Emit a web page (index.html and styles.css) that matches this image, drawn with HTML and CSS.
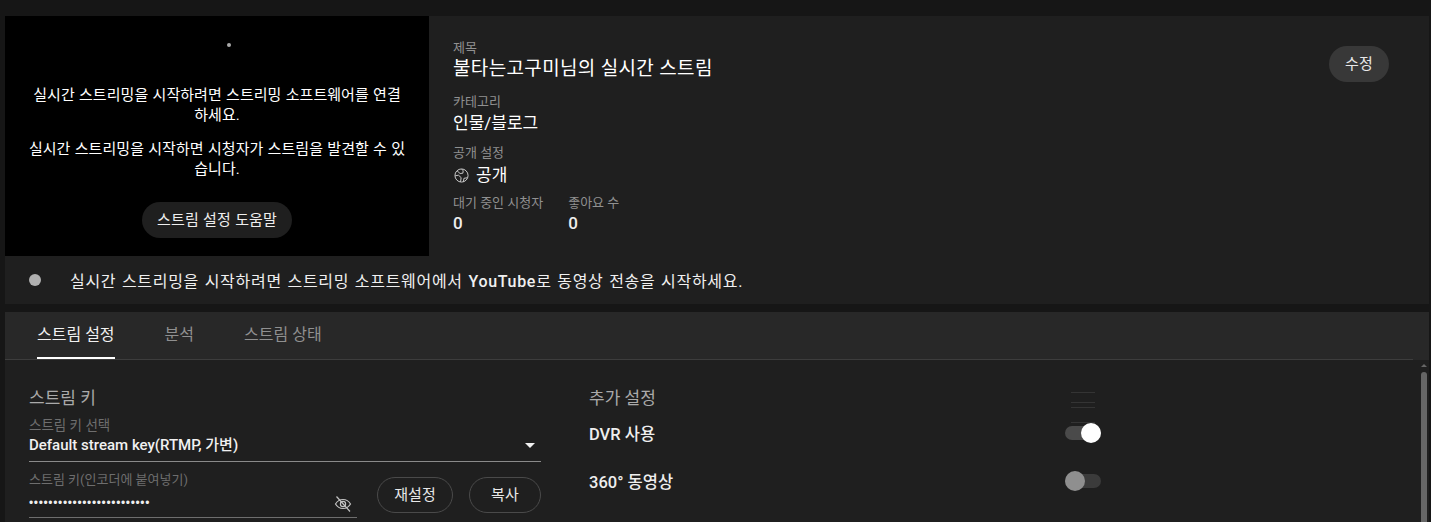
FILE: index.html
```html
<!DOCTYPE html>
<html lang="ko">
<head>
<meta charset="utf-8">
<title>스트림 설정</title>
<link rel="stylesheet" href="styles.css">
</head>
<body>
<div class="page">
  <section class="top">
    <div class="video">
      <span class="dot"></span>
      <p class="msg first">실시간 스트리밍을 시작하려면 스트리밍 소프트웨어를 연결하세요.</p>
      <p class="msg second">실시간 스트리밍을 시작하면 시청자가 스트림을 발견할 수 있습니다.</p>
      <button class="help">스트림 설정 도움말</button>
    </div>
    <div class="info">
      <div class="fields">
        <div class="label">제목</div>
        <div class="title">불타는고구미님의 실시간 스트림</div>
        <div class="label cat">카테고리</div>
        <div class="value">인물/블로그</div>
        <div class="label vis">공개 설정</div>
        <div class="value public">
          <svg class="globe" viewBox="0 0 16 16" width="15" height="15" fill="none" stroke="#cfcfcf" stroke-width="1"><circle cx="8" cy="8" r="7"/><path d="M3.200 2.900l3.300 3 3-.4.3-2.500-1.800-2M1.200 8.300l3.600-.6 2.800 2.500-.6 4.600M10 14.600l.6-3.600 3.400-.6"/></svg>
          <span>공개</span>
        </div>
        <div class="stats">
          <div class="stat"><div class="label">대기 중인 시청자</div><div class="num">0</div></div>
          <div class="stat"><div class="label">좋아요 수</div><div class="num">0</div></div>
        </div>
      </div>
      <button class="edit">수정</button>
    </div>
  </section>
  <section class="status">
    <span class="led"></span>
    <span class="status-text">실시간 스트리밍을 시작하려면 스트리밍 소프트웨어에서 <b class="latin">YouTube</b>로 동영상 전송을 시작하세요.</span>
  </section>
  <nav class="tabs">
    <a class="tab active">스트림 설정</a>
    <a class="tab">분석</a>
    <a class="tab">스트림 상태</a>
  </nav>
  <section class="panel">
    <div class="left">
      <h2 class="head">스트림 키</h2>
      <div class="small pick">스트림 키 선택</div>
      <div class="select"><span>Default stream key(RTMP, 가변)</span><i class="caret"></i></div>
      <div class="keyrow">
        <div class="keyfield">
          <div class="small keylabel">스트림 키(인코더에 붙여넣기)</div>
          <div class="keyinput">
            <span class="dots">•••••••••••••••••••••••••</span>
            <svg class="eye" viewBox="0 0 20 20" width="20" height="20" fill="none" stroke="#c4c4c4" stroke-width="1.200"><path d="M2.500 10c1.800-3 4.400-4.500 7.500-4.500s5.700 1.500 7.500 4.500c-1.800 3-4.400 4.500-7.500 4.500S4.300 13 2.500 10z"/><circle cx="10" cy="10" r="2.600"/><path d="M3.500 2.500l13.500 15"/></svg>
          </div>
        </div>
        <button class="outline reset">재설정</button>
        <button class="outline copy">복사</button>
      </div>
    </div>
    <div class="right">
      <h2 class="head">추가 설정</h2>
      <div class="row dvr"><span>DVR 사용</span><span class="switch on"><i></i></span></div>
      <div class="row vr"><span>360° 동영상</span><span class="switch"><i></i></span></div>
      <div class="ghost"><i></i><i></i><i></i><i></i></div>
    </div>
    <div class="scroll"><i class="arrow"></i><i class="thumb"></i></div>
  </section>
</div>
</body>
</html>
```
FILE: styles.css
```css
* { box-sizing: border-box; }
html, body { margin: 0; height: 522px; overflow: hidden; background: #161616; }
body, button { font-family: Roboto, "Noto Sans CJK KR", sans-serif; color: #fff; }
.page { padding: 16px 2px 0 5px; width: 1431px; }
p, h2 { margin: 0; font-weight: 400; }
button { border: 0; cursor: pointer; font-weight: 400; font-size: 15px; letter-spacing: .1px; word-spacing: .5px; line-height: 20px; padding: 0; }

.top { display: flex; height: 240px; background: #1f1f1f; }
.video { width: 424px; background: #000; display: flex; flex-direction: column; align-items: center; padding-top: 27px; }
.dot { width: 4px; height: 4px; border-radius: 50%; background: #aaa; margin: 0 0 38px 24px; }
.msg { width: 378px; font-size: 15px; letter-spacing: .05px; word-spacing: .5px; line-height: 20px; text-align: center; color: #fff; word-break: break-all; }
.msg.first { margin-bottom: 14px; }
.msg.second { margin-bottom: 23px; }
.help { width: 150px; height: 36px; border-radius: 18px; background: #1f1f1f; color: #eee; }

.info { flex: 1; display: flex; justify-content: space-between; padding: 24px 40px 0 24px; }
.label { font-size: 13px; line-height: 16px; color: #909090; }
.title { font-size: 19px; letter-spacing: .35px; line-height: 26px; }
.label.cat { margin-top: 12px; }
.value { font-size: 17px; line-height: 24px; margin-top: 1px; }
.label.vis { margin-top: 10px; }
.public { display: flex; align-items: center; gap: 7px; margin-top: 2px; }
.globe { flex: none; margin-left: 1px; }
.stats { display: flex; gap: 25px; margin-top: 8px; }
.num { font-size: 17px; line-height: 24px; font-weight: 500; color: #eee; }
.edit { width: 60px; height: 36px; border-radius: 18px; background: #383838; color: #e8e8e8; margin-top: 6px; }

.status { height: 48px; background: #1f1f1f; display: flex; align-items: center; padding-left: 24px; margin-bottom: 8px; }
.led { width: 12px; height: 12px; border-radius: 50%; background: #b0b0b0; margin-right: 29px; }
.status-text { font-size: 16px; letter-spacing: .7px; word-spacing: 1px; color: #f0f0f0; }
.latin { font-weight: 500; }

.tabs { position: relative; height: 48px; background: #282828; display: flex; padding-left: 32px; gap: 50px; }
.tabs::after { content: ""; position: absolute; left: 0; bottom: 0; width: 1408px; height: 1px; background: #3d3d3d; }
.tab { position: relative; z-index: 1; font-size: 16px; line-height: 46px; height: 47px; color: #909090; }
.tab.active { color: #f1f1f1; border-bottom: 2px solid #fff; }

.panel { position: relative; height: 162px; background: #1f1f1f; display: flex; padding: 27px 0 0 24px; }
.left { width: 512px; margin-right: 48px; }
.right { position: relative; width: 512px; }
.head { font-size: 17px; line-height: 22px; color: #aaa; }
.small { font-size: 13.500px; line-height: 16px; color: #6e6e6e; }
.pick { margin-top: 8px; }
.keylabel { font-size: 13px; }
.select { display: flex; justify-content: space-between; align-items: center; height: 29px; border-bottom: 1px solid #8a8a8a; font-size: 15px; font-weight: 500; color: #f1f1f1; padding: 0 6px 8px 0; }
.caret { width: 0; height: 0; border: 5px solid transparent; border-top: 5px solid #f1f1f1; border-bottom: 0; margin-top: 4px; }
.keyrow { display: flex; align-items: flex-start; margin-top: 10px; }
.keyfield { width: 328px; margin-right: 20px; }
.keyinput { height: 30px; display: flex; align-items: center; justify-content: space-between; border-bottom: 1px solid #6e6e6e; padding-right: 4px; }
.dots { font-family: "Liberation Sans", sans-serif; font-size: 12px; letter-spacing: .64px; color: #eee; }
.eye { margin-top: 3px; }
.outline { height: 36px; background: transparent; border: 1px solid #4a4a4a; border-radius: 18px; color: #e8e8e8; margin-top: 5px; }
.reset { width: 76px; margin-right: 16px; }
.copy { width: 72px; }
.row { display: flex; justify-content: space-between; align-items: center; width: 512px; color: #eee; height: 24px; }
.row span:first-child { font-weight: 500; font-size: 16.500px; }
.dvr { margin-top: 12px; }
.vr { margin-top: 24px; }
.switch { position: relative; width: 36px; height: 14px; border-radius: 7px; background: #3b3b3b; }
.switch i { position: absolute; top: -3px; left: 0; width: 20px; height: 20px; border-radius: 50%; background: #8f8f8f; }
.switch.on { background: #4a4a4a; }
.switch.on i { left: 16px; background: #fff; }
.ghost { position: absolute; left: 482px; top: 5px; width: 24px; height: 32px; }
.ghost i { position: absolute; left: 0; width: 24px; height: 1px; background: #343434; }
.ghost i:nth-child(1) { top: 0; }
.ghost i:nth-child(2) { top: 10px; }
.ghost i:nth-child(3) { top: 15px; }
.ghost i:nth-child(4) { top: 30px; }
.scroll { position: absolute; right: 2px; top: 4px; width: 6px; bottom: 0; }
.arrow { position: absolute; top: 0; left: 0; border: 3px solid transparent; border-bottom: 3px solid #666; border-top: 0; }
.thumb { position: absolute; top: 8px; bottom: 0; left: 0; width: 6px; background: #666; border-radius: 3px 3px 0 0; }
```
